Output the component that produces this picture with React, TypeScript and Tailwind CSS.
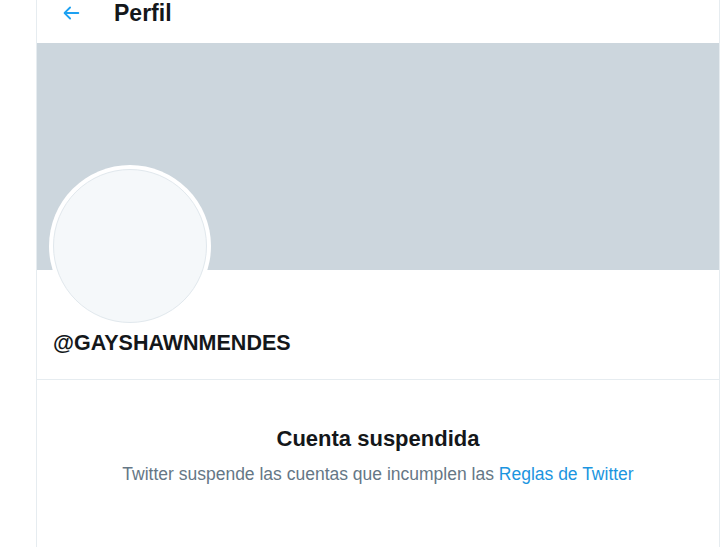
import React from 'react';

function BackArrow() {
  return (
    <svg viewBox="0 0 24 24" className="w-[22px] h-[22px] fill-[#1da1f2]">
      <path d="M20 11H7.414l4.293-4.293a1 1 0 0 0-1.414-1.414l-6 6a1 1 0 0 0 0 1.414l6 6a.996.996 0 0 0 1.414 0 1 1 0 0 0 0-1.414L7.414 13H20a1 1 0 1 0 0-2z" />
    </svg>
  );
}

export default function App() {
  const username = "@GAYSHAWNMENDES";

  return (
    <div
      className="w-[728px] h-[547px] bg-white overflow-hidden flex text-[#14171a]"
      style={{ fontFamily: '"Liberation Sans", Arial, sans-serif' }}
    >
      <div className="w-[36px] shrink-0" />
      <main className="w-[684px] shrink-0 border-x border-[#e6ecf0] flex flex-col">
        {/* header */}
        <div className="h-[43px] flex items-start pt-[1px] pl-[23px]">
          <div className="h-[24px] flex items-center">
            <BackArrow />
          </div>
          <h1 className="ml-[32px] text-[23px] leading-[24px] font-bold">Perfil</h1>
        </div>

        {/* banner */}
        <div className="h-[227px] bg-[#ccd6dd]" />

        {/* profile */}
        <div className="border-b border-[#e6ecf0] pb-[22px]">
          <div className="ml-[12px] -mt-[105px] w-[162px] h-[162px] rounded-full bg-white p-[4px]">
            <div className="w-full h-full rounded-full bg-[#f5f8fa] border border-[#e1e8ed]" />
          </div>
          <div className="mt-[3px] pl-[16px] text-[21.5px] leading-[27px] font-bold">{username}</div>
        </div>

        {/* suspended notice */}
        <div className="flex flex-col items-center text-center mt-[45px]">
          <h2 className="text-[22px] leading-[27px] font-bold">Cuenta suspendida</h2>
          <p className="mt-[11px] text-[17.5px] leading-[22px] text-[#657786]">
            Twitter suspende las cuentas que incumplen las{" "}
            <a href="#" className="text-[#1b95e0]">Reglas de Twitter</a>
          </p>
        </div>
      </main>
    </div>
  );
}
